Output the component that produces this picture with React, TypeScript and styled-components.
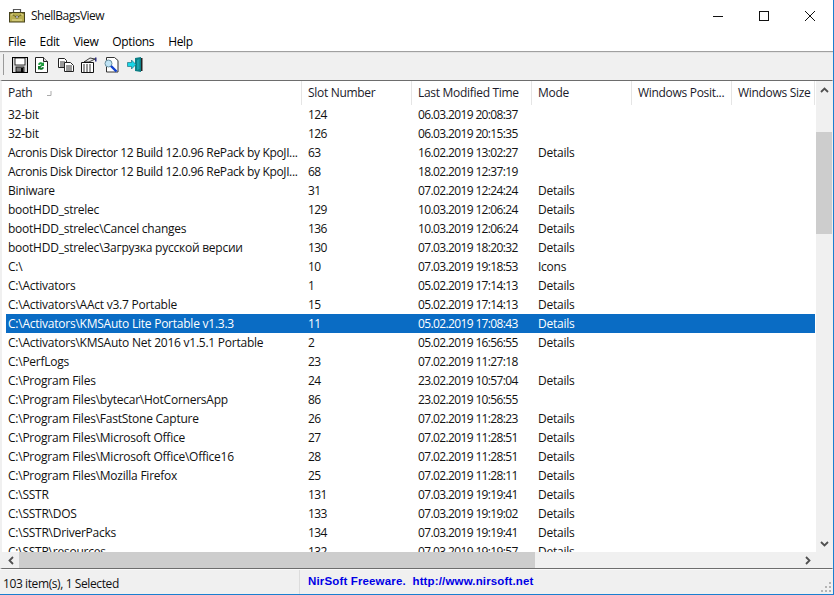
import React from "react";
import styled, { createGlobalStyle } from "styled-components";

const Global = createGlobalStyle`
  html, body { margin: 0; padding: 0; background: #fff; overflow: hidden; }
  #root { width: 834px; height: 595px; }
`;

const Win = styled.div`
  width: 834px; height: 595px; box-sizing: border-box;
  display: flex; flex-direction: column; background: #f0f0f0; overflow: hidden;
  border-right: 1px solid #1a7fd0; border-bottom: 1px solid #1a7fd0;
  font-family: "Open Sans", "Noto Sans", sans-serif; font-size: 12px; color: #000;
`;
const TitleBar = styled.div`
  height: 31px; flex: none; background: #fff; display: flex; align-items: center; padding-left: 9px;
`;
const TitleText = styled.span`
  margin-left: 6px; font-size: 12px; color: #111; letter-spacing: -0.5px;
`;
const WinButtons = styled.div`
  margin-left: auto; display: flex; height: 31px; align-items: center;
`;
const WinBtn = styled.div`
  width: 46px; height: 31px; display: flex; align-items: center; justify-content: center;
`;
const MenuBar = styled.div`
  height: 20px; flex: none; background: #fff; display: flex; align-items: center; padding-left: 8px; gap: 14px;
  border-bottom: 1px solid #a0a0a0; letter-spacing: -0.35px;
`;
const ToolBar = styled.div`
  height: 28px; flex: none; display: flex; align-items: center; padding: 0 0 4px 3px;
  border-top: 1px solid #e4e4e4; box-sizing: border-box;
`;
const Grip = styled.div`
  width: 1px; height: 21px; background: #9a9a9a; margin-right: 4px;
`;
const Tool = styled.div`
  width: 23px; height: 22px; display: flex; align-items: center; justify-content: center;
`;
const ListFrame = styled.div`
  height: 489px; flex: none; display: flex; flex-direction: column; background: #fff;
  border-top: 1px solid #6d6d6d; border-bottom: 1px solid #6d6d6d; border-left: 2px solid #f0f0f0;
  border-right: 1px solid #f0f0f0; box-sizing: border-box;
`;
const ListBody = styled.div`
  flex: 1; min-height: 0; display: flex;
`;
const Table = styled.div`
  flex: 1; min-width: 0; overflow: hidden; padding-left: 4px; background: #fff;
`;
const Row = styled.div<{ $sel?: boolean }>`
  display: grid; grid-template-columns: 296px 110px 120px 100px 100px 83px;
  width: 809px; height: 19px; align-items: center; white-space: nowrap;
  background: ${p => (p.$sel ? "#0a6cc4" : "#fff")};
  color: ${p => (p.$sel ? "#fff" : "#111")};
`;
const HeaderRow = styled(Row)`
  height: 24px;
`;
const HCell = styled.div<{ $first?: boolean }>`
  height: 24px; line-height: 23px; box-sizing: border-box; overflow: hidden; white-space: nowrap;
  padding-left: ${p => (p.$first ? "2px" : "6px")};
  letter-spacing: -0.3px;
  border-right: 1px solid #e5e5e5; color: #1a1a2a; position: relative;
`;
const Cell = styled.div<{ $first?: boolean; $num?: boolean; $long?: boolean }>`
  padding-left: ${p => (p.$first ? "2px" : "6px")}; overflow: hidden; white-space: nowrap;
  letter-spacing: ${p => (p.$num ? "-0.63px" : p.$long ? "-0.36px" : "-0.24px")};
`;
const SortMark = styled.svg`
  position: absolute; left: 40px; top: 9px;
`;
const VScroll = styled.div`
  width: 16px; flex: none; background: #f0f0f0; display: flex; flex-direction: column;
`;
const VArrow = styled.div`
  height: 17px; flex: none; display: flex; align-items: center; justify-content: center;
`;
const VTrack = styled.div`
  flex: 1; padding-top: 34px; padding-bottom: 301px; box-sizing: border-box; display: flex;
`;
const VThumb = styled.div`
  flex: 1; background: #cdcdcd;
`;
const HScroll = styled.div`
  height: 16px; flex: none; background: #f0f0f0; display: flex;
`;
const HArrow = styled.div`
  width: 17px; flex: none; display: flex; align-items: center; justify-content: center;
`;
const HThumb = styled.div`
  width: 516px; flex: none; background: #cdcdcd;
`;
const HRest = styled.div`
  flex: 1;
`;
const Corner = styled.div`
  width: 16px; flex: none;
`;
const StatusBar = styled.div`
  flex: 1; display: flex; align-items: center; position: relative; border-top: 1px solid #fafafa;
`;
const StatusLeft = styled.div`
  width: 300px; box-sizing: border-box; padding: 2px 0 0 3px; color: #111; border-right: 1px solid #dcdcdc;
  height: 100%; display: flex; align-items: center; letter-spacing: -0.4px;
`;
const StatusLink = styled.div`
  margin: 0 0 2px 8px; color: #0000e6; font-family: "Liberation Sans", Arial, sans-serif;
  font-weight: 700; font-size: 11.500px; letter-spacing: 0.15px; white-space: pre;
`;
const SizeGrip = styled.svg`
  position: absolute; right: 1px; bottom: 1px;
`;

const rows: [string, string, string, string][] = [
  ["32-bit", "124", "06.03.2019 20:08:37", ""],
  ["32-bit", "126", "06.03.2019 20:15:35", ""],
  ["Acronis Disk Director 12 Build 12.0.96 RePack by KpoJI...", "63", "16.02.2019 13:02:27", "Details"],
  ["Acronis Disk Director 12 Build 12.0.96 RePack by KpoJI...", "68", "18.02.2019 12:37:19", ""],
  ["Biniware", "31", "07.02.2019 12:24:24", "Details"],
  ["bootHDD_strelec", "129", "10.03.2019 12:06:24", "Details"],
  ["bootHDD_strelec\\Cancel changes", "136", "10.03.2019 12:06:24", "Details"],
  ["bootHDD_strelec\\Загрузка русской версии", "130", "07.03.2019 18:20:32", "Details"],
  ["C:\\", "10", "07.03.2019 19:18:53", "Icons"],
  ["C:\\Activators", "1", "05.02.2019 17:14:13", "Details"],
  ["C:\\Activators\\AAct v3.7 Portable", "15", "05.02.2019 17:14:13", "Details"],
  ["C:\\Activators\\KMSAuto Lite Portable v1.3.3", "11", "05.02.2019 17:08:43", "Details"],
  ["C:\\Activators\\KMSAuto Net 2016 v1.5.1 Portable", "2", "05.02.2019 16:56:55", "Details"],
  ["C:\\PerfLogs", "23", "07.02.2019 11:27:18", ""],
  ["C:\\Program Files", "24", "23.02.2019 10:57:04", "Details"],
  ["C:\\Program Files\\bytecar\\HotCornersApp", "86", "23.02.2019 10:56:55", ""],
  ["C:\\Program Files\\FastStone Capture", "26", "07.02.2019 11:28:23", "Details"],
  ["C:\\Program Files\\Microsoft Office", "27", "07.02.2019 11:28:51", "Details"],
  ["C:\\Program Files\\Microsoft Office\\Office16", "28", "07.02.2019 11:28:51", "Details"],
  ["C:\\Program Files\\Mozilla Firefox", "25", "07.02.2019 11:28:11", "Details"],
  ["C:\\SSTR", "131", "07.03.2019 19:19:41", "Details"],
  ["C:\\SSTR\\DOS", "133", "07.03.2019 19:19:02", "Details"],
  ["C:\\SSTR\\DriverPacks", "134", "07.03.2019 19:19:41", "Details"],
  ["C:\\SSTR\\resources", "132", "07.03.2019 19:19:57", "Details"],
];

const AppIcon = () => (
  <svg width="16" height="15" viewBox="0 0 16 15">
    <path d="M4.500 4V1.500h7V4" fill="none" stroke="#555" strokeWidth="1.200" />
    <rect x=".5" y="4.500" width="15" height="9.500" fill="#b8ae50" stroke="#46421c" />
    <path d="M1 5l7 4.500L15 5" fill="none" stroke="#6d6526" />
    <path d="M2 7l2-1M12 6l2 1M3 12h10" stroke="#e8df98" />
    <rect x="7" y="8" width="2" height="2" fill="#fff" stroke="#333" strokeWidth=".5" />
  </svg>
);
const SaveIcon = () => (
  <svg width="16" height="16" viewBox="0 0 16 16">
    <rect x=".5" y=".5" width="15" height="15" fill="#d8d8d8" stroke="#000" />
    <rect x="3" y="1" width="10" height="7" fill="#fff" stroke="#000" strokeWidth=".8" />
    <rect x="4" y="10" width="8" height="5" fill="#777" stroke="#000" strokeWidth=".8" />
    <rect x="9" y="11" width="2" height="4" fill="#000" />
  </svg>
);
const RefreshIcon = () => (
  <svg width="13" height="16" viewBox="0 0 13 16" style={{ marginRight: 2 }}>
    <path d="M.5.5h8l4 4v11h-12z" fill="#fff" stroke="#222" />
    <path d="M8.500.5v4h4" fill="#ddd" stroke="#222" />
    <path d="M3 7.500a3 3 0 0 1 5-1.500l1-1v4H5l1.500-1.500a1.500 1.500 0 0 0-2 .5z" fill="#1a9a3a" />
    <path d="M9 10.500a3 3 0 0 1-5 1.500l-1 1V9h4l-1.500 1.500a1.500 1.500 0 0 0 2-.5z" fill="#107a2a" />
  </svg>
);
const CopyIcon = () => (
  <svg width="16" height="14" viewBox="0 0 16 14">
    <path d="M.5.5h6l2 2v7h-8z" fill="#fff" stroke="#222" />
    <path d="M2 4h5M2 6h5M2 8h5" stroke="#333" />
    <path d="M6.500 4.500h6l3 3v6h-9z" fill="#fff" stroke="#222" />
    <path d="M8 8h6M8 10h6M8 12h6" stroke="#333" />
  </svg>
);
const PropsIcon = () => (
  <svg width="16" height="16" viewBox="0 0 16 16">
    <path d="M.5 5.500h12v10H.5z" fill="#fff" stroke="#111" />
    <path d="M2 8h9M2 10h9M2 12h9M2 14h9" stroke="#333" strokeDasharray="2 1" />
    <path d="M3 5l6-4 5 1-6 3z" fill="#e8e8e8" stroke="#111" strokeWidth=".8" />
    <path d="M14 .5h1.500v4H14z" fill="#2a2a80" />
  </svg>
);
const FindIcon = () => (
  <svg width="15" height="16" viewBox="0 0 15 16">
    <path d="M2.500.5h8l3.500 3V15h-11.500z" fill="#fff" stroke="#333" />
    <circle cx="4.500" cy="6.500" r="3.500" fill="#bfe3f5" stroke="#6a8f9f" />
    <path d="M7 9l5.500 5.500" stroke="#1040d0" strokeWidth="2.400" />
  </svg>
);
const ExitIcon = () => (
  <svg width="16" height="15" viewBox="0 0 16 15">
    <path d="M8 1l6-1v15l-6-1z" fill="#0c7f86" />
    <path d="M14 1h1.500v13H14z" fill="#222" />
    <path d="M10 3l2.500-1v10L10 13z" fill="#19a5ad" />
    <path d="M.5 5.500h4V3l4.500 4.500L4.500 12V9.500h-4z" fill="#19d6e6" stroke="#106070" strokeWidth=".6" />
  </svg>
);
const Up = () => (
  <svg width="9" height="6" viewBox="0 0 9 6"><path d="M1 5l3.500-3.500L8 5" fill="none" stroke="#505050" strokeWidth="1.800" /></svg>
);
const Down = () => (
  <svg width="9" height="6" viewBox="0 0 9 6"><path d="M1 1l3.500 3.500L8 1" fill="none" stroke="#505050" strokeWidth="1.800" /></svg>
);
const Left = () => (
  <svg width="6" height="9" viewBox="0 0 6 9"><path d="M5 1L1.500 4.500 5 8" fill="none" stroke="#505050" strokeWidth="1.800" /></svg>
);
const RightA = () => (
  <svg width="6" height="9" viewBox="0 0 6 9"><path d="M1 1l3.500 3.500L1 8" fill="none" stroke="#505050" strokeWidth="1.800" /></svg>
);

export default function App() {
  return (
    <>
      <Global />
      <Win>
        <TitleBar>
          <AppIcon />
          <TitleText>ShellBagsView</TitleText>
          <WinButtons>
            <WinBtn>
              <svg width="10" height="10" viewBox="0 0 10 10"><path d="M0 5.500h10" stroke="#111" /></svg>
            </WinBtn>
            <WinBtn>
              <svg width="10" height="10" viewBox="0 0 10 10"><rect x=".5" y=".5" width="9" height="9" fill="none" stroke="#111" /></svg>
            </WinBtn>
            <WinBtn>
              <svg width="10" height="10" viewBox="0 0 10 10"><path d="M0 0l10 10M10 0L0 10" stroke="#111" /></svg>
            </WinBtn>
          </WinButtons>
        </TitleBar>
        <MenuBar>
          <span>File</span><span>Edit</span><span>View</span><span>Options</span><span>Help</span>
        </MenuBar>
        <ToolBar>
          <Grip />
          <Tool><SaveIcon /></Tool>
          <Tool><RefreshIcon /></Tool>
          <Tool><CopyIcon /></Tool>
          <Tool><PropsIcon /></Tool>
          <Tool><FindIcon /></Tool>
          <Tool><ExitIcon /></Tool>
        </ToolBar>
        <ListFrame>
          <ListBody>
            <Table>
              <HeaderRow>
                <HCell $first>Path<SortMark width="6" height="6" viewBox="0 0 6 6"><path d="M1 5.500h4V1" fill="none" stroke="#aaa" /></SortMark></HCell>
                <HCell>Slot Number</HCell>
                <HCell>Last Modified Time</HCell>
                <HCell>Mode</HCell>
                <HCell>Windows Posit...</HCell>
                <HCell>Windows Size</HCell>
              </HeaderRow>
              {rows.map((r, i) => (
                <Row key={i} $sel={i === 11}>
                  <Cell $first $long={r[0].length > 50}>{r[0]}</Cell>
                  <Cell $num>{r[1]}</Cell>
                  <Cell $num>{r[2]}</Cell>
                  <Cell>{r[3]}</Cell>
                  <Cell />
                  <Cell />
                </Row>
              ))}
            </Table>
            <VScroll>
              <VArrow><Up /></VArrow>
              <VTrack><VThumb /></VTrack>
              <VArrow><Down /></VArrow>
            </VScroll>
          </ListBody>
          <HScroll>
            <HArrow><Left /></HArrow>
            <HThumb />
            <HRest />
            <HArrow><RightA /></HArrow>
            <Corner />
          </HScroll>
        </ListFrame>
        <StatusBar>
          <StatusLeft>103 item(s), 1 Selected</StatusLeft>
          <StatusLink>{"NirSoft Freeware.  http://www.nirsoft.net"}</StatusLink>
          <SizeGrip width="12" height="12" viewBox="0 0 12 12">
            <path d="M9 1h2v2H9zM5 5h2v2H5zM9 5h2v2H9zM1 9h2v2H1zM5 9h2v2H5zM9 9h2v2H9z" fill="#b5b5b5" />
          </SizeGrip>
        </StatusBar>
      </Win>
    </>
  );
}
